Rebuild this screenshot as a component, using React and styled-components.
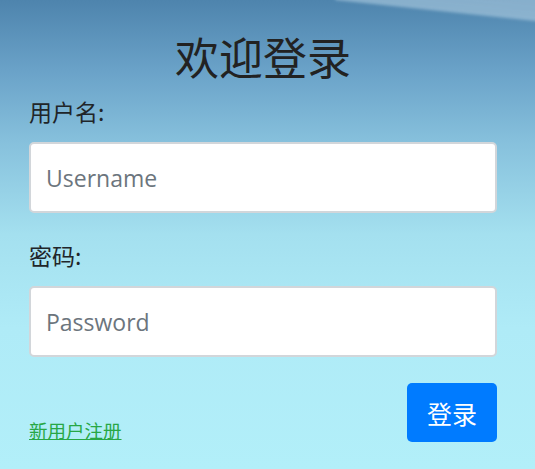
import React from "react";
import styled, { createGlobalStyle } from "styled-components";

const Global = createGlobalStyle`
  html, body { margin: 0; padding: 0; }
  body { font-family: "Open Sans", "Noto Sans CJK SC", sans-serif; }
`;

const Page = styled.div`
  position: relative;
  overflow: hidden;
  min-height: 469px;
  box-sizing: border-box;
  padding: 30px 38px 0 29px;
  background: linear-gradient(
    180deg,
    #4e84ad 0%,
    #6aa2c8 15%,
    #86c0dc 30%,
    #a4e0ef 50%,
    #afebf7 70%,
    #b2eff9 100%
  );
  &::before {
    content: "";
    position: absolute;
    left: 335px;
    top: -200px;
    width: 420px;
    height: 200px;
    transform-origin: 0 100%;
    transform: rotate(6deg);
    background: linear-gradient(0deg, rgba(175, 205, 225, 0.6), rgba(160, 195, 218, 0.45));
    filter: blur(1.5px);
  }
`;

const Form = styled.form`
  position: relative;
  display: flex;
  flex-direction: column;
`;

const Title = styled.h1`
  margin: 0 0 14px;
  font-family: "Noto Sans CJK SC", sans-serif;
  font-weight: 400;
  font-size: 44px;
  line-height: 52px;
  text-align: center;
  color: #222;
`;

const Label = styled.label`
  font-family: "Noto Sans CJK SC", sans-serif;
  font-size: 23px;
  line-height: 30px;
  color: #212529;
  margin-bottom: 16px;
`;

const Input = styled.input`
  box-sizing: border-box;
  width: 100%;
  height: 71px;
  padding: 0 15px;
  border: 2px solid #d2d6da;
  border-radius: 5px;
  background: #fff;
  font-family: "Open Sans", sans-serif;
  font-size: 23px;
  color: #495057;
  outline: none;
  margin-bottom: ${(p) => p.$mb || 0}px;
  &::placeholder { color: #6c757d; }
`;

const Actions = styled.div`
  display: flex;
  justify-content: space-between;
  align-items: flex-end;
  margin-top: 26px;
`;

const RegisterLink = styled.a`
  font-family: "Noto Sans CJK SC", sans-serif;
  font-size: 18.5px;
  line-height: 24px;
  color: #28a745;
  text-decoration: underline;
`;

const SubmitButton = styled.button`
  width: 90px;
  height: 59px;
  border: none;
  border-radius: 5px;
  background: #007bff;
  color: #fff;
  font-family: "Noto Sans CJK SC", sans-serif;
  font-size: 25px;
  cursor: pointer;
`;

export default function App() {
  return (
    <>
      <Global />
      <Page>
        <Form onSubmit={(e) => e.preventDefault()}>
          <Title>欢迎登录</Title>
          <Label htmlFor="u">用户名:</Label>
          <Input id="u" placeholder="Username" $mb={27} />
          <Label htmlFor="p">密码:</Label>
          <Input id="p" type="password" placeholder="Password" />
          <Actions>
            <RegisterLink href="#">新用户注册</RegisterLink>
            <SubmitButton type="submit">登录</SubmitButton>
          </Actions>
        </Form>
      </Page>
    </>
  );
}
